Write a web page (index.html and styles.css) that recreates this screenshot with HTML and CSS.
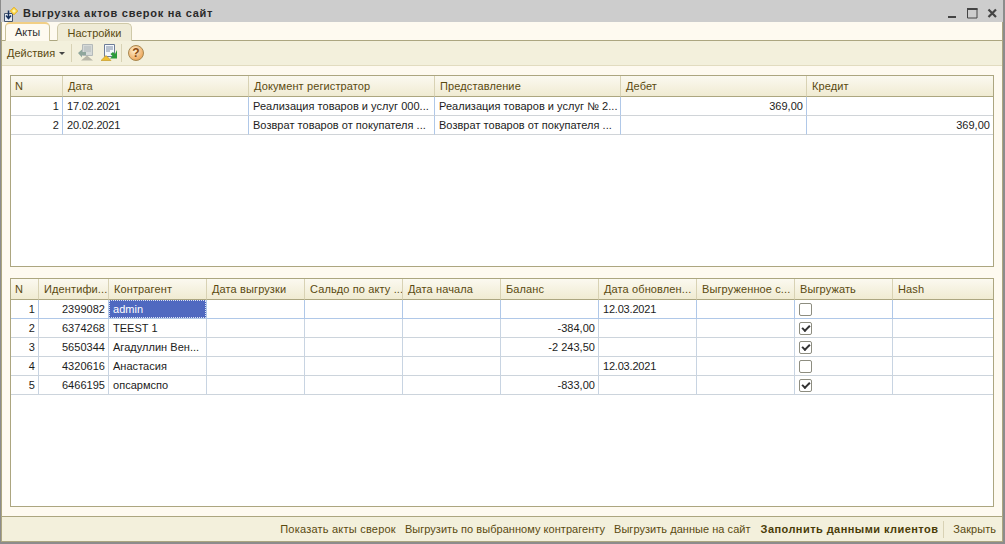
FILE: index.html
```html
<!DOCTYPE html>
<html lang="ru">
<head>
<meta charset="utf-8">
<title>Выгрузка актов сверок на сайт</title>
<link rel="stylesheet" href="styles.css">
</head>
<body>
<div class="window">
  <header class="titlebar">
    <svg class="title-icon" width="18" height="18" viewBox="0 0 18 18">
      <path d="M2.500 9.500h8v8h-8z" fill="#e4ebf4" stroke="#46566e"/>
      <path d="M6.500 6.500v7M4 11.500l2.500 3 2.500-3" fill="none" stroke="#16305c" stroke-width="1.500"/>
      <path d="M12 3l4 4-4 4-4-4z" fill="#f6d040" stroke="#e0ac30" stroke-width=".7"/>
      <path d="M12 5l2 2-2 2-2-2z" fill="#fff6b0"/>
    </svg>
    <span class="title-text">Выгрузка актов сверок на сайт</span>
    <div class="win-buttons">
      <svg width="11" height="12" viewBox="0 0 11 12"><rect x="1" y="9" width="8" height="2" fill="#444"/></svg>
      <svg width="11" height="12" viewBox="0 0 11 12"><path d="M.5 1.500h9.500v9.500h-9.500z" fill="none" stroke="#444"/><rect x="0" y="1" width="10.500" height="2" fill="#444"/></svg>
      <svg width="11" height="12" viewBox="0 0 11 12"><path d="M1.500 2.500l7.500 7.500M9 2.500l-7.500 7.500" stroke="#444" stroke-width="2.200"/></svg>
    </div>
  </header>
  <div class="frame">
    <nav class="tabs">
      <span class="tab tab-active">Акты</span>
      <span class="tab">Настройки</span>
    </nav>
    <div class="toolbar">
      <span class="menu">Действия<i class="caret"></i></span>
      <i class="sep"></i>
      <svg class="tool tool-a" width="18" height="18" viewBox="0 0 18 18">
        <path d="M5.500 .5h10v11h-10z" fill="#d6dad8" stroke="#b4baba"/>
        <path d="M7 3h7M7 5h7M7 7h7" stroke="#b0b8ba"/>
        <path d="M1 9l4-3.500v2.500h4v3H5v2.500z" fill="#8fa69c"/>
        <path d="M4 16.500l6-5 6 5z" fill="#b8b6a8"/>
      </svg>
      <svg class="tool tool-b" width="18" height="18" viewBox="0 0 18 18">
        <path d="M3.500 .5h10v12h-10z" fill="#f4f8fc" stroke="#6c7c98"/>
        <path d="M5 3h7M5 5h7M5 7h4" stroke="#7c8ca4"/>
        <path d="M16 6v8.500h-7l2.500-2.500-2-2 2.500-2 2 2z" fill="#2c9a3a"/>
        <path d="M0 16.500l5-5 5 5z" fill="#f0c030" stroke="#c09018" stroke-width=".6"/>
      </svg>
      <i class="sep sep-b"></i>
      <svg class="tool tool-c" width="18" height="18" viewBox="0 0 18 18">
        <defs><radialGradient id="help" cx=".4" cy=".35" r=".7"><stop offset="0" stop-color="#fff0d0"/><stop offset="1" stop-color="#eba050"/></radialGradient></defs>
        <circle cx="9" cy="9" r="7.500" fill="url(#help)" stroke="#a88850"/>
        <text x="9" y="13" text-anchor="middle" class="help-mark">?</text>
      </svg>
    </div>
    <main class="content">
      <section class="panel panel-top">
        <table class="grid">
          <colgroup><col class="w51"><col class="w186"><col class="w186"><col class="w186"><col class="w186"><col class="w187"></colgroup>
          <thead><tr><th>N</th><th>Дата</th><th>Документ регистратор</th><th>Представление</th><th>Дебет</th><th>Кредит</th></tr></thead>
          <tbody>
            <tr class="current"><td class="num">1</td><td class="date">17.02.2021</td><td>Реализация товаров и услуг 000...</td><td>Реализация товаров и услуг № 2...</td><td class="num">369,00</td><td></td></tr>
            <tr class="current"><td class="num">2</td><td class="date">20.02.2021</td><td>Возврат товаров от покупателя ...</td><td>Возврат товаров от покупателя ...</td><td></td><td class="num">369,00</td></tr>
          </tbody>
        </table>
      </section>
      <section class="panel panel-bottom">
        <table class="grid">
          <colgroup><col class="w27"><col class="w70"><col class="w98"><col class="w98"><col class="w98"><col class="w98"><col class="w98"><col class="w98"><col class="w98"><col class="w98"><col class="w101"></colgroup>
          <thead><tr><th>N</th><th>Идентифи...</th><th>Контрагент</th><th>Дата выгрузки</th><th>Сальдо по акту ...</th><th>Дата начала</th><th>Баланс</th><th>Дата обновлен...</th><th>Выгруженное с...</th><th>Выгружать</th><th>Hash</th></tr></thead>
          <tbody>
            <tr class="current"><td class="num">1</td><td class="num">2399082</td><td class="selected"><span>admin</span></td><td></td><td></td><td></td><td></td><td class="date">12.03.2021</td><td></td><td><i class="check"></i></td><td></td></tr>
            <tr><td class="num">2</td><td class="num">6374268</td><td>TEEST 1</td><td></td><td></td><td></td><td class="num">-384,00</td><td></td><td></td><td><i class="check on"></i></td><td></td></tr>
            <tr><td class="num">3</td><td class="num">5650344</td><td>Агадуллин Вен...</td><td></td><td></td><td></td><td class="num">-2 243,50</td><td></td><td></td><td><i class="check on"></i></td><td></td></tr>
            <tr><td class="num">4</td><td class="num">4320616</td><td>Анастасия</td><td></td><td></td><td></td><td></td><td class="date">12.03.2021</td><td></td><td><i class="check"></i></td><td></td></tr>
            <tr><td class="num">5</td><td class="num">6466195</td><td>опсармспо</td><td></td><td></td><td></td><td class="num">-833,00</td><td></td><td></td><td><i class="check on"></i></td><td></td></tr>
          </tbody>
        </table>
      </section>
    </main>
    <footer class="actions">
      <span class="wide">Показать акты сверок</span>
      <span>Выгрузить по выбранному контрагенту</span>
      <span>Выгрузить данные на сайт</span>
      <span class="primary">Заполнить данными клиентов</span>
      <i class="sep-foot"></i>
      <span>Закрыть</span>
    </footer>
  </div>
</div>
</body>
</html>
```
FILE: styles.css
```css
* { box-sizing: border-box; }
html, body { margin: 0; height: 100%; }
body {
  width: 1005px;
  height: 544px;
  overflow: hidden;
  background: #cdcdcd;
  font-family: "Liberation Sans", Arial, sans-serif;
  font-size: 11px;
  color: #1c1c1c;
}
.window {
  height: 544px;
  display: flex;
  flex-direction: column;
  border: 1px solid #8c8c8c;
  border-top: 0;
  border-right-width: 2px;
  border-bottom-width: 2px;
}
.titlebar {
  height: 22px;
  flex: none;
  display: flex;
  align-items: center;
  padding: 3px 5px 0 1px;
  background: #cdcdcd;
}
.title-icon { flex: none; }
.title-text {
  margin-left: 3px;
  font-weight: bold;
  font-size: 11px;
  letter-spacing: .72px;
  color: #2a2a2a;
}
.win-buttons { margin-left: auto; display: flex; gap: 9px; }
.frame {
  flex: 1;
  min-height: 0;
  display: flex;
  flex-direction: column;
  background: #fefaf0;
  border-left: 1px solid #aca680;
  border-right: 1px solid #aca680;
  border-bottom: 1px solid #aca680;
}
.tabs {
  height: 19px;
  flex: none;
  display: flex;
  align-items: flex-end;
  gap: 7px;
  padding-left: 3px;
  margin-bottom: -1px;
  position: relative;
  z-index: 1;
}
.tab {
  width: 75px;
  height: 18px;
  padding-top: 3px;
  text-align: center;
  border: 1px solid #cfc9a8;
  border-bottom: 0;
  border-radius: 5px 5px 0 0;
  background: #efebd6;
  color: #5a4a10;
}
.tab-active {
  height: 19px;
  width: 45px;
  background: #fefaf0;
  border-color: #c8c098;
  border-top: 2px solid #f2cf85;
  color: #333;
  padding-top: 2px;
}
.toolbar {
  height: 26px;
  flex: none;
  display: flex;
  align-items: center;
  padding-left: 5px;
  background: #f3f0dc;
  border-top: 1px solid #aca680;
  border-bottom: 1px solid #e2dcc0;
  color: #5a4a10;
}
.menu { display: flex; align-items: center; }
.caret {
  margin-left: 4px;
  width: 0;
  height: 0;
  border: 3px solid transparent;
  border-top: 3px solid #444;
  border-bottom: 0;
}
.sep { width: 1px; height: 18px; margin-left: 6px; background: #d8d2b4; }
.sep-b { margin-left: 2px; }
.tool { flex: none; }
.tool-a { margin-left: 5px; }
.tool-b { margin-left: 6px; }
.tool-c { margin-left: 5px; }
.help-mark { font: bold 12px "Liberation Sans", sans-serif; fill: #8a4a10; }
.content {
  flex: 1;
  min-height: 0;
  display: flex;
  flex-direction: column;
  gap: 11px;
  padding: 9px 8px;
}
.panel {
  background: #fff;
  border: 1px solid #aca680;
}
.panel-top { height: 192px; flex: none; }
.panel-bottom { flex: 1; min-height: 0; }
.grid {
  width: 982px;
  border-collapse: separate;
  border-spacing: 0;
  table-layout: fixed;
}
.w27 { width: 27px; }
.w51 { width: 51px; }
.w70 { width: 70px; }
.w98 { width: 98px; }
.w101 { width: 101px; }
.w186 { width: 186px; }
.w187 { width: 187px; }
th {
  height: 21px;
  padding: 0 3px 0 5px;
  text-align: left;
  font-weight: normal;
  color: #5a4a10;
  letter-spacing: .12px;
  white-space: nowrap;
  overflow: hidden;
  background: linear-gradient(#fbf9f0, #f0ebd2);
  border-left: 1px solid #d8d2b4;
  border-bottom: 1px solid #aca680;
}
th:first-child { border-left: 0; padding-left: 4px; }
td {
  height: 19px;
  padding: 0 4px;
  white-space: nowrap;
  overflow: hidden;
  letter-spacing: .03px;
  border-left: 1px solid #c8d4e2;
  border-bottom: 1px solid #ccd4dc;
}
td:first-child { border-left: 0; }
.current td { border-bottom-color: #b0c8e8; border-left-color: #b0c8e8; }
.panel-top .current td { border-bottom-color: #d0d4d8; }
.num { text-align: right; padding-right: 3px; }
td.date { letter-spacing: -.2px; }
td.selected { padding: 0; }
.selected span {
  display: block;
  height: 18px;
  line-height: 16px;
  padding: 0 3px;
  background: #5069c0;
  color: #fff;
  border: 1px dotted #dfe4f4;
}
.check {
  display: block;
  width: 13px;
  height: 13px;
  border: 1px solid #8d8d80;
  border-radius: 2px;
  background: #fff;
  position: relative;
}
.check.on::after {
  content: "";
  position: absolute;
  left: 2px;
  top: 2px;
  width: 6px;
  height: 3px;
  border-left: 2px solid #333;
  border-bottom: 2px solid #333;
  transform: rotate(-45deg);
}
.actions {
  height: 25px;
  flex: none;
  display: flex;
  justify-content: flex-end;
  align-items: center;
  gap: 9px;
  padding-right: 6px;
  background: #f3f0dc;
  border-top: 1px solid #aca680;
  color: #5a4a10;
  letter-spacing: .04px;
}
.wide { letter-spacing: .22px; }
.primary { font-weight: bold; color: #4a3c08; letter-spacing: .44px; margin-left: 1px; }
.sep-foot { width: 1px; height: 17px; background: #d8d2b4; margin: 0 -3px 0 -3px; }
.primary + .sep-foot { margin-left: -4px; margin-right: 0; }
```
